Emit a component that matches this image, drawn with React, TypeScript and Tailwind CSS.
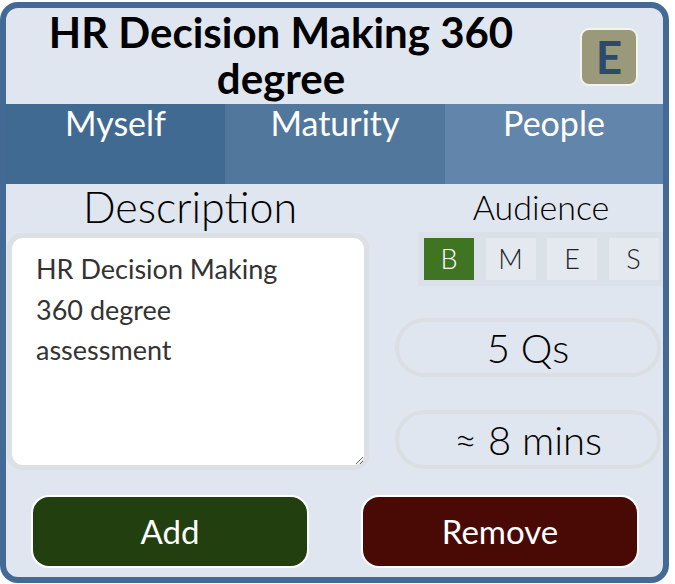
export default function App() {
  const audience = ["B", "M", "E", "S"];

  return (
    <div className="w-[675px] h-[584px] bg-white pt-[2px]" style={{ fontFamily: "Lato, 'Noto Sans', sans-serif" }}>
      <div className="w-[669px] h-[581px] rounded-[18px] border-[6px] border-[#436a94] bg-[#dfe6ef] overflow-hidden flex flex-col">
        {/* Title */}
        <div className="h-[96px] shrink-0 flex items-start">
          <h1 className="w-[550px] text-center font-bold text-[42px] leading-[46px] text-black pt-[1px]">
            HR Decision Making 360 degree
          </h1>
          <div className="mt-[20px] ml-[24px] w-[58px] h-[58px] rounded-[9px] border-2 border-[#f4f4ee] bg-[#9a9a7b] flex items-center justify-center">
            <span className="font-bold text-[46px] leading-none text-[#2b4a6c]">E</span>
          </div>
        </div>

        {/* Tabs */}
        <div className="h-[80px] shrink-0 flex text-white text-[34px]">
          <div className="w-[219px] bg-[#416a93] text-center leading-[38px]">Myself</div>
          <div className="w-[220px] bg-[#52779c] text-center leading-[38px]">Maturity</div>
          <div className="flex-1 bg-[#6185ab] text-center leading-[38px]">People</div>
        </div>

        {/* Body */}
        <div className="flex-1 flex flex-col">
          <div className="flex">
            <div className="w-[363px] shrink-0 flex flex-col pl-[1px]">
              <div className="text-center text-[43px] font-light leading-[46px] pl-[4px]">Description</div>
              <div className="mt-[3px] w-[362px] h-[237px] rounded-[15px] bg-[#dcdfe3] p-[5px]">
                <textarea
                  readOnly
                  className="w-full h-full resize-y rounded-[11px] bg-white pl-[24px] pr-[10px] pt-[11px] text-[27px] leading-[40.5px] text-[#333] outline-none"
                  defaultValue={"HR Decision Making\n360 degree\nassessment"}
                />
              </div>
            </div>

            <div className="flex-1 flex flex-col items-start pl-[26px]">
              <div className="w-[266px] text-center text-[34px] font-light leading-[40px] mt-[3px] pl-[26px]">Audience</div>
              <div className="mt-[5px] ml-[23px] flex gap-[11.5px] bg-[#dbe1e8] p-[6px] pr-[10px]">
                {audience.map((a) => (
                  <div
                    key={a}
                    className={
                      a === "B"
                        ? "w-[50px] h-[42px] shrink-0 flex items-center justify-center bg-[#3f7522] text-white text-[27px] font-light"
                        : "w-[50px] h-[42px] shrink-0 flex items-center justify-center bg-[#e4e9f0] text-[#222] text-[27px] font-light"
                    }
                  >
                    {a}
                  </div>
                ))}
              </div>
              <div className="mt-[32px] w-[266px] h-[59px] rounded-full border-4 border-[#dbdfe4] flex items-center justify-center text-[40px] font-light text-black">
                5 Qs
              </div>
              <div className="mt-[33px] w-[266px] h-[59px] rounded-full border-4 border-[#dbdfe4] flex items-center justify-center text-[40px] font-light text-black">
                ≈ 8 mins
              </div>
            </div>
          </div>

          <div className="flex mt-[25px]">
            <button className="ml-[25px] w-[278px] h-[73px] rounded-[18px] border-2 border-white bg-[#22400f] text-white text-[33px]">
              Add
            </button>
            <button className="ml-[52px] w-[278px] h-[73px] rounded-[18px] border-2 border-white bg-[#490a06] text-white text-[33px]">
              Remove
            </button>
          </div>
        </div>
      </div>
    </div>
  );
}
